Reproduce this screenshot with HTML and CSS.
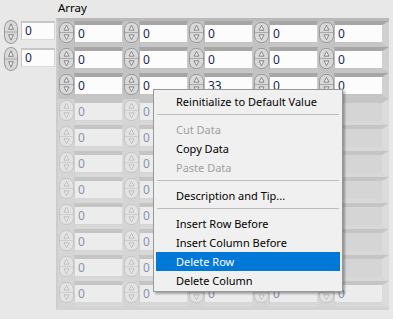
FILE: index.html
```html
<!DOCTYPE html>
<html lang="en">
  <head>
    <meta charset="UTF-8" />
    <title>Array</title>
    <link rel="stylesheet" href="styles.css">
  </head>
  <body>
    <div class="panel">
      <div class="indices">
        <div class="index">
          <span class="spin big" data-spin></span>
          <div class="index-field">0</div>
        </div>
        <div class="index">
          <span class="spin big" data-spin></span>
          <div class="index-field">0</div>
        </div>
      </div>

      <div class="array">
        <div class="array-label">Array</div>
        <div class="frame" id="frame"></div>
      </div>
    </div>

    <ul class="menu">
      <li class="item">Reinitialize to Default Value</li>
      <li class="sep"></li>
      <li class="item disabled">Cut Data</li>
      <li class="item">Copy Data</li>
      <li class="item disabled">Paste Data</li>
      <li class="sep"></li>
      <li class="item">Description and Tip...</li>
      <li class="sep"></li>
      <li class="item">Insert Row Before</li>
      <li class="item">Insert Column Before</li>
      <li class="item active">Delete Row</li>
      <li class="item">Delete Column</li>
    </ul>

    <script>
      // up/down increment buttons
      const spinSvg =
        '<svg viewBox="0 0 15 22" preserveAspectRatio="none">' +
        '<path class="body" d="M7.5 0.5C12 0.5 14.5 4 14.5 8V14C14.5 18 12 21.5 7.5 21.5C3 21.5 0.5 18 0.5 14V8C0.5 4 3 0.5 7.5 0.5Z"/>' +
        '<line class="mid" x1="1" y1="11" x2="14" y2="11"/>' +
        '<path class="arrow" d="M7.5 3.5L10 8.5H5Z"/>' +
        '<path class="arrow" d="M7.5 18.5L10 13.5H5Z"/>' +
        "</svg>";

      document.querySelectorAll("[data-spin]").forEach((el) => {
        el.innerHTML = spinSvg;
      });

      // array elements, only the first three rows hold data
      const values = [
        [0, 0, 0, 0, 0],
        [0, 0, 0, 0, 0],
        [0, 0, 33, 0, 0],
      ];
      const frame = document.getElementById("frame");

      for (let r = 0; r < 11; r++) {
        for (let c = 0; c < 5; c++) {
          const cell = document.createElement("div");
          cell.className = r < values.length ? "cell" : "cell empty";
          // rows sitting under the open menu don't show their digits
          if (r >= 3 && r <= 9 && c >= 2) cell.className += " covered";
          const value = r < values.length ? values[r][c] : 0;
          cell.innerHTML =
            '<span class="spin">' + spinSvg + "</span>" +
            '<div class="field"><span class="num">' + value + "</span></div>";
          frame.appendChild(cell);
        }
      }
    </script>
  </body>
</html>
```

FILE: styles.css
```css
body {
  margin: 0;
  width: 393px;
  height: 319px;
  overflow: hidden;
  position: relative;
  background-color: #e8e8e8;
  font-family: "Noto Sans", "Open Sans", sans-serif;
  font-size: 11px;
  color: #000;
}

.panel {
  display: flex;
}

/* index display */
.indices {
  width: 56px;
  padding-top: 18px;
  box-sizing: border-box;
  padding-left: 4px;
}

.index {
  display: flex;
  align-items: center;
  height: 27px;
}

.index-field {
  box-sizing: border-box;
  width: 34px;
  height: 19px;
  margin-left: 3px;
  margin-top: -2px;
  padding-left: 3px;
  background-color: #fcfcfc;
  border-top: 2px solid #c6c6c6;
  border-left: 1px solid #c6c6c6;
  border-right: 1px solid #d6d6d6;
  border-bottom: 1px solid #dadada;
  line-height: 16px;
  font-size: 12px;
  color: #1a1f5a;
}

/* spinner */
.spin {
  display: block;
  width: 15px;
  height: 21px;
  flex-shrink: 0;
}

.spin.big {
  width: 14px;
  height: 24px;
}

.spin svg {
  display: block;
  width: 100%;
  height: 100%;
}

.spin .body {
  fill: #d9d9d9;
  stroke: #959595;
}

.spin .mid {
  stroke: #a9a9a9;
}

.spin .arrow {
  fill: #efefef;
  stroke: #6e6e6e;
  stroke-width: 0.8;
}

/* array */
.array-label {
  height: 18px;
  line-height: 16px;
  padding-left: 2px;
  font-size: 11.5px;
}

.frame {
  display: grid;
  grid-template-columns: repeat(4, 65px) 71px;
  grid-auto-rows: 26px;
  border-top: 3px solid #b9b9b9;
  border-left: 2px solid #cdcdcd;
  border-bottom: 3px solid #d3d3d3;
  background-color: #c3c3c3;
}

.cell {
  display: flex;
  padding-left: 1px;
}

.cell .spin {
  margin-top: 1px;
}

.field {
  flex: 1;
  box-sizing: border-box;
  border-top: 4px solid #a6a6a6;
  border-left: 1px solid #bcbcbc;
  border-right: 1px solid #cbcbcb;
  border-bottom: 4px solid #c6c6c6;
  background-color: #c3c3c3;
}

.cell:nth-child(5n) .field {
  border-right: 7px solid #d0d0d0;
}

.num {
  display: block;
  height: 17px;
  line-height: 17px;
  padding-left: 3px;
  background-color: #fcfcfc;
  font-size: 12px;
  color: #1a1f5a;
}

/* elements past the end of the data */
.cell.empty {
  background-color: #d5d5d5;
}

.cell.empty .field {
  border-top-color: #c5c5c5;
  border-left-color: #d0d0d0;
  border-right-color: #d9d9d9;
  border-bottom-color: #d8d8d8;
  background-color: #d5d5d5;
}

.cell.empty:nth-child(5n) .field {
  border-right-color: #dcdcdc;
}

.cell.empty .num {
  background-color: #ececec;
  color: #8a93ad;
}

.cell.covered .num {
  visibility: hidden;
}

.cell.empty .spin .body {
  fill: #e3e3e3;
  stroke: #c2c2c2;
}

.cell.empty .spin .mid {
  stroke: #cdcdcd;
}

.cell.empty .spin .arrow {
  fill: #ececec;
  stroke: #b4b4b4;
}

/* context menu */
.menu {
  position: absolute;
  left: 153px;
  top: 89px;
  width: 190px;
  box-sizing: border-box;
  margin: 0;
  padding: 2px 2px 1px;
  list-style: none;
  background-color: #f0f0f0;
  border: 1px solid #979797;
  box-shadow: 2px 2px 2px rgba(0, 0, 0, 0.3);
}

.item {
  height: 19px;
  line-height: 19px;
  padding-left: 20px;
  white-space: nowrap;
}

.item.disabled {
  color: #a0a0a0;
}

.item.active {
  background-color: #0078d7;
  color: #fff;
}

.sep {
  height: 9px;
  margin: 0 1px;
  position: relative;
}

.sep::after {
  content: "";
  position: absolute;
  left: 0;
  right: 0;
  top: 3px;
  border-top: 1px solid #bdbdbd;
}
```
